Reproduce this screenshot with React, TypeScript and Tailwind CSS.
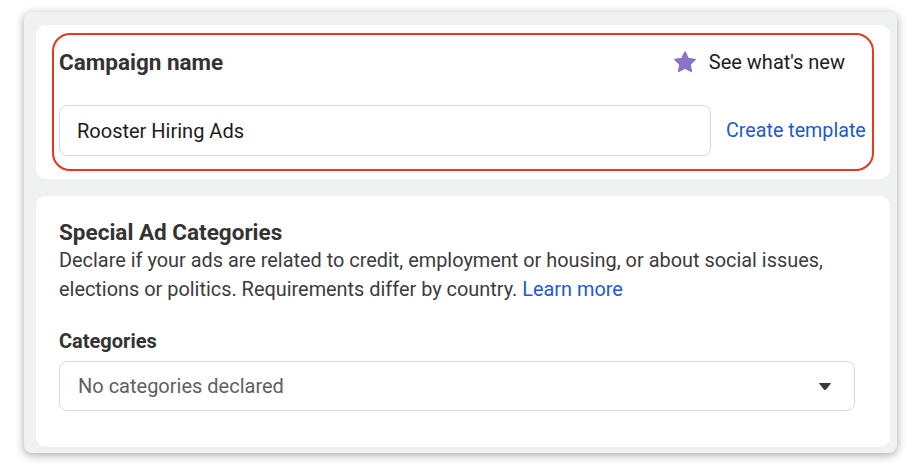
import React from "react";

function StarIcon() {
  return (
    <svg width="24" height="22" viewBox="0 0 24 22" className="shrink-0">
      <path
        d="M12 1.2l3.1 6.4 7 .9-5.1 4.9 1.3 7-6.3-3.4-6.3 3.4 1.3-7L1.9 8.5l7-.9z"
        fill="#8a73c9"
        stroke="#8a73c9"
        strokeWidth="1.6"
        strokeLinejoin="round"
      />
    </svg>
  );
}

function Caret() {
  return (
    <svg width="14" height="9" viewBox="0 0 14 9">
      <path d="M1.5 1.5h11L7.6 7.4a.8.8 0 0 1-1.2 0z" fill="#3a3b3c" stroke="#3a3b3c" strokeWidth="1" strokeLinejoin="round" />
    </svg>
  );
}

export default function App() {
  return (
    <div
      className="w-[922px] h-[468px] bg-white pt-3 px-6 overflow-hidden"
      style={{ fontFamily: "Roboto, 'Liberation Sans', sans-serif" }}
    >
      <div className="w-[873px] h-[441px] bg-[#f0f2f2] rounded-lg shadow-[0_2px_10px_rgba(0,0,0,0.35)] pt-[13px] pl-3 pr-[7px] flex flex-col gap-[17px]">
        {/* Campaign name */}
        <section className="bg-white rounded-[10px] h-[154px] px-4 pt-2">
          <div className="h-[138px] border-2 border-[#e3391c] rounded-[18px] px-[5px] pt-[12px]">
            <div className="flex items-center justify-between pr-[22px]">
              <h2 className="text-[22.5px] font-bold text-[#333333] leading-[30px]">Campaign name</h2>
              <div className="flex items-center gap-3">
                <StarIcon />
                <span className="text-[20px] text-[#1c1c1c]">See what's new</span>
              </div>
            </div>
            <div className="flex items-center gap-[15px] mt-[28px]">
              <div className="shrink-0 w-[652px] h-[51px] border border-[#d8d9da] rounded-lg flex items-center px-[17px]">
                <span className="text-[20px] text-[#1c1c1c]">Rooster Hiring Ads</span>
              </div>
              <a className="text-[19.7px] text-[#1b5bcf] whitespace-nowrap">Create template</a>
            </div>
          </div>
        </section>

        {/* Special Ad Categories */}
        <section className="bg-white rounded-[10px] h-[251px] px-[23px] pt-[23px]">
          <h2 className="text-[22.5px] font-bold text-[#333333] leading-[26px]">Special Ad Categories</h2>
          <p className="text-[19.9px] text-[#3c3c3c] leading-[29px] mt-[1px]">
            Declare if your ads are related to credit, employment or housing, or about social issues,
            <br />
            elections or politics. Requirements differ by country.{" "}
            <a className="text-[#1b5bcf]">Learn more</a>
          </p>
          <h3 className="text-[20px] font-bold text-[#333333] mt-[24px] leading-[26px]">Categories</h3>
          <div className="mt-[7px] w-[796px] h-[50px] border border-[#d8d9da] rounded-lg flex items-center justify-between pl-[18px] pr-[22px]">
            <span className="text-[20px] text-[#606060]">No categories declared</span>
            <Caret />
          </div>
        </section>
      </div>
    </div>
  );
}
